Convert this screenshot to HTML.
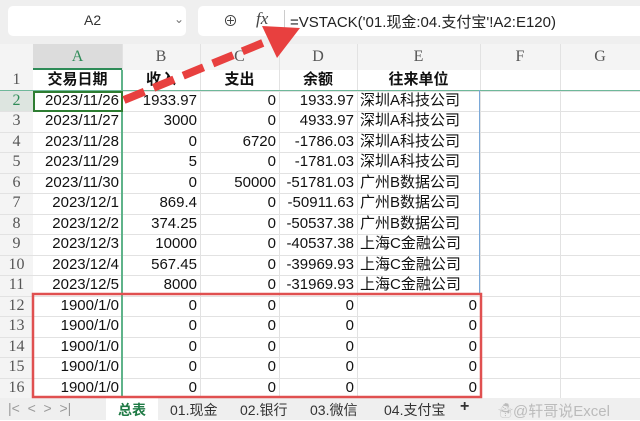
<!DOCTYPE html>
<html><head><meta charset="utf-8"><style>
*{margin:0;padding:0;box-sizing:border-box}
body{width:640px;height:420px;overflow:hidden;background:#fff;font-family:"Liberation Sans","Noto Sans CJK SC",sans-serif;position:relative}
.tb{position:absolute;left:0;top:0;width:640px;height:44px;background:#efefef}
.nb{position:absolute;left:8px;top:6px;width:178px;height:30px;background:#fff;border-radius:5px;font-size:14px;color:#333}
.fb{position:absolute;left:198px;top:6px;width:450px;height:30px;background:#fff;border-radius:5px;font-size:15px;color:#222}
.g{position:absolute;left:0;top:44px;width:640px;height:354px}
.c{position:absolute;height:20.5px;line-height:20.5px;font-size:15px;color:#111;white-space:nowrap;overflow:hidden;padding:0 3px}
.r{text-align:right}.m{text-align:center}
.h{position:absolute;font-family:"Liberation Serif","Noto Serif CJK SC",serif;color:#555;font-size:16px;text-align:center}
.tabs{position:absolute;left:0;top:398px;width:640px;height:22px;background:#efefef;font-size:14px;color:#333}
.tabs span{position:absolute;top:2px}
</style></head><body>
<div class="tb"></div>
<div class="nb"><span style="position:absolute;left:76px;top:6px">A2</span><span style="position:absolute;left:166px;top:6px;color:#777;font-size:12px">&#8964;</span></div>
<div class="fb"><span style="position:absolute;left:25px;top:4px;color:#444">&#8853;</span><span style="position:absolute;left:58px;top:3px;font-family:'Liberation Serif',serif;font-style:italic;color:#444;font-size:17px">fx</span><span style="position:absolute;left:86px;top:4px;width:1px;height:22px;background:#ccc"></span><span style="position:absolute;left:92px;top:5px">=VSTACK('01.现金:04.支付宝'!A2:E120)</span></div>
<div class="g" id="g"></div>
<div class="tabs">
<span style="left:8px;color:#999">|&lt;&nbsp;&nbsp;&lt;&nbsp;&nbsp;&gt;&nbsp;&nbsp;&gt;|</span>
<div style="position:absolute;left:106px;top:0;width:52px;height:22px;background:#fff"></div>
<span style="left:118px;color:#1f7a45;font-weight:bold">总表</span>
<span style="left:170px">01.现金</span><span style="left:240px">02.银行</span><span style="left:310px">03.微信</span><span style="left:384px">04.支付宝</span>
<span style="left:460px;font-weight:bold;font-size:16px;top:0">+</span>
<span style="left:498px;color:#bbb;font-size:15px">&#9731;@轩哥说Excel</span>
</div>
<svg style="position:absolute;left:0;top:0" width="640" height="420">
<line x1="124" y1="100" x2="270" y2="40" stroke="#e8403f" stroke-width="8" stroke-dasharray="22 10"/>
<polygon points="300,28 262,26 277,58" fill="#e8403f"/>
<rect x="33" y="294" width="448" height="103" fill="none" stroke="#e05050" stroke-width="2.5"/>
</svg>
<script>
var g=document.getElementById('g'),h='';
var cols=[[0,33],[33,122],[122,200],[200,279],[279,357],[357,480],[480,560],[560,640]];
var L='ABCDEFG';
h+='<div style="position:absolute;left:0;top:0;width:640px;height:26px;background:#f4f4f4"></div>';
h+='<div style="position:absolute;left:0;top:26px;width:33px;height:328px;background:#f4f4f4"></div>';
h+='<div style="position:absolute;left:33px;top:0;width:89px;height:26px;background:#dcdcdc;border-bottom:2px solid #2e8b57"></div>';
h+='<div style="position:absolute;left:0;top:46.5px;width:33px;height:20.5px;background:#dde5e0"></div>';
for(var i=1;i<8;i++){var c=cols[i];h+='<div style="position:absolute;left:'+c[1]+'px;top:0;width:1px;height:354px;background:#e2e2e2"></div>';
h+='<div class="h" style="left:'+c[0]+'px;width:'+(c[1]-c[0])+'px;top:4px;'+(i==1?'color:#2e8b57':'')+'">'+L[i-1]+'</div>';}
for(var r=1;r<=17;r++){var t=26+r*20.5;h+='<div style="position:absolute;left:0;top:'+t+'px;width:640px;height:1px;background:#e2e2e2"></div>';
if(r<=16)h+='<div class="h" style="left:0;width:33px;top:'+(26+(r-1)*20.5+1)+'px;'+(r==2?'color:#2e8b57':'')+'">'+r+'</div>';}
var d=[['交易日期','收入','支出','余额','往来单位'],
['2023/11/26','1933.97','0','1933.97','深圳A科技公司'],['2023/11/27','3000','0','4933.97','深圳A科技公司'],['2023/11/28','0','6720','-1786.03','深圳A科技公司'],['2023/11/29','5','0','-1781.03','深圳A科技公司'],['2023/11/30','0','50000','-51781.03','广州B数据公司'],['2023/12/1','869.4','0','-50911.63','广州B数据公司'],['2023/12/2','374.25','0','-50537.38','广州B数据公司'],['2023/12/3','10000','0','-40537.38','上海C金融公司'],['2023/12/4','567.45','0','-39969.93','上海C金融公司'],['2023/12/5','8000','0','-31969.93','上海C金融公司']];
for(var k=0;k<5;k++)d.push(['1900/1/0','0','0','0','0']);
for(var r=0;r<16;r++){var t=26+r*20.5;for(var j=0;j<5;j++){var c=cols[j+1];var cls=r==0?'m':(j==4&&r<11?'':'r');var st=r==0?'font-weight:bold;':'';
h+='<div class="c '+cls+'" style="'+st+'left:'+c[0]+'px;width:'+(c[1]-c[0])+'px;top:'+t+'px">'+d[r][j]+'</div>';}}
h+='<div style="position:absolute;left:0;top:46px;width:640px;height:1px;background:#6fb89a"></div>';
h+='<div style="position:absolute;left:121px;top:26px;width:1.5px;height:328px;background:#5fb38a"></div>';
h+='<div style="position:absolute;left:479px;top:46px;width:1px;height:205px;background:#7aa8d8"></div>';
h+='<div style="position:absolute;left:33px;top:46.5px;width:90px;height:21px;border:2px solid #2e7d32"></div>';
g.innerHTML=h;
</script>
</body></html>
